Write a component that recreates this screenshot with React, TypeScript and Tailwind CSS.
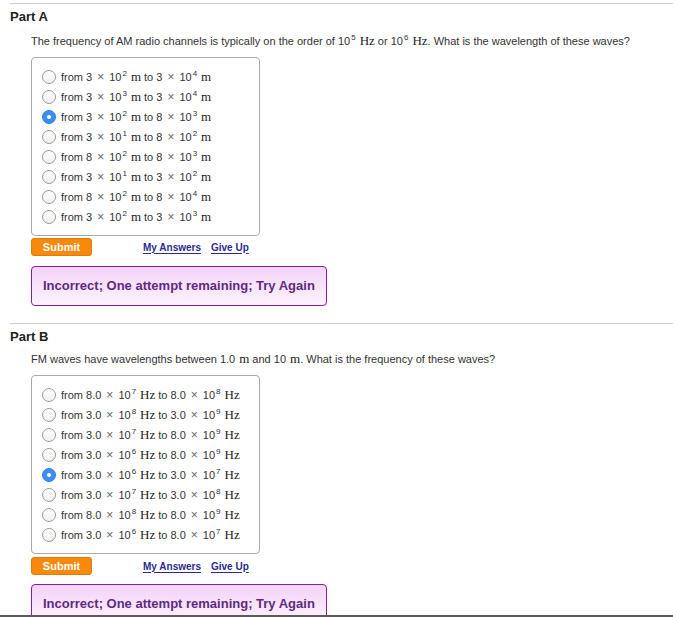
import React from 'react';

type Opt = { a: string; ea: string; b: string; eb: string; unit: string; checked?: boolean };

const Times = () => <span className="mx-[5px] text-[#666] font-['Liberation_Sans',sans-serif] text-[12px]">×</span>;

const Unit = ({ u, tight }: { u: string; tight?: boolean }) => (
    <span className={`font-['Liberation_Serif',serif] text-[13px] text-[#222] ml-[4px] ${tight ? 'mr-0' : 'mr-[3px]'}`}>{u}</span>
);

const Pow = ({ e }: { e: string }) => (
    <span>
        10<sup className="text-[8px] -top-[5px] ml-[1px]">{e}</sup>
    </span>
);

const Radio = ({ checked }: { checked?: boolean }) =>
    checked ? (
        <span className="w-[14px] h-[14px] rounded-full bg-[#3a8ef6] border border-[#2f7de0] flex items-center justify-center shrink-0">
            <span className="w-[4px] h-[4px] rounded-full bg-white" />
        </span>
    ) : (
        <span className="w-[14px] h-[14px] rounded-full bg-gradient-to-b from-white to-[#f0f0f0] border border-[#9a9a9a] shrink-0" />
    );

const OptionRow = ({ o }: { o: Opt }) => (
    <div className="h-[20px] flex items-center gap-[5px]">
        <Radio checked={o.checked} />
        <span className="text-[11px] text-[#333] whitespace-nowrap">
            from {o.a}
            <Times />
            <Pow e={o.ea} />
            <Unit u={o.unit} />
            to {o.b}
            <Times />
            <Pow e={o.eb} />
            <Unit u={o.unit} />
        </span>
    </div>
);

const Part = ({
    title,
    question,
    options,
    spacing,
}: {
    title: string;
    question: React.ReactNode;
    options: Opt[];
    spacing: { q: string; box: string; sub: string; msg: string; end: string };
}) => (
    <section className="ml-[10px] border-t border-[#cccccc]">
        <h2 className="mt-[5px] text-[13px] leading-[16px] font-bold text-[#222]">{title}</h2>
        <div className={`ml-[21px] ${spacing.q} text-[11px] leading-[16px] text-[#333]`}>{question}</div>
        <div className={`ml-[21px] ${spacing.box} w-[229px] border border-[#aaaaaa] rounded-[4px] pt-[9px] pb-[8px] pl-[10px]`}>
            {options.map((o, i) => (
                <OptionRow key={i} o={o} />
            ))}
        </div>
        <div className={`ml-[21px] ${spacing.sub} flex items-center`}>
            <button className="w-[61px] h-[18px] rounded-[3px] bg-[#f7890c] border border-[#e27b06] text-white text-[11px] font-bold leading-none">
                Submit
            </button>
            <a className="ml-[51px] text-[10px] font-bold text-[#2b2b8f] underline underline-offset-2">My Answers</a>
            <a className="ml-[10px] text-[10px] font-bold text-[#2b2b8f] underline underline-offset-2">Give Up</a>
        </div>
        <div
            className={`ml-[21px] ${spacing.msg} ${spacing.end} w-[296px] h-[40px] rounded-[4px] border border-[#8a1c9c] bg-gradient-to-b from-[#f4d2f9] to-[#fdf3fd] flex items-center pl-[11px] text-[13px] font-bold text-[#5d2b80]`}
        >
            Incorrect; One attempt remaining; Try Again
        </div>
    </section>
);

const partA: Opt[] = [
    { a: '3', ea: '2', b: '3', eb: '4', unit: 'm' },
    { a: '3', ea: '3', b: '3', eb: '4', unit: 'm' },
    { a: '3', ea: '2', b: '8', eb: '3', unit: 'm', checked: true },
    { a: '3', ea: '1', b: '8', eb: '2', unit: 'm' },
    { a: '8', ea: '2', b: '8', eb: '3', unit: 'm' },
    { a: '3', ea: '1', b: '3', eb: '2', unit: 'm' },
    { a: '8', ea: '2', b: '8', eb: '4', unit: 'm' },
    { a: '3', ea: '2', b: '3', eb: '3', unit: 'm' },
];

const partB: Opt[] = [
    { a: '8.0', ea: '7', b: '8.0', eb: '8', unit: 'Hz' },
    { a: '3.0', ea: '8', b: '3.0', eb: '9', unit: 'Hz' },
    { a: '3.0', ea: '7', b: '8.0', eb: '9', unit: 'Hz' },
    { a: '3.0', ea: '6', b: '8.0', eb: '9', unit: 'Hz' },
    { a: '3.0', ea: '6', b: '3.0', eb: '7', unit: 'Hz', checked: true },
    { a: '3.0', ea: '7', b: '3.0', eb: '8', unit: 'Hz' },
    { a: '8.0', ea: '8', b: '8.0', eb: '9', unit: 'Hz' },
    { a: '3.0', ea: '6', b: '8.0', eb: '7', unit: 'Hz' },
];

export default function App() {
    return (
        <div className="w-[673px] h-[617px] overflow-hidden bg-white font-['Liberation_Sans',Arial,sans-serif] relative">
            <div className="pt-[3px]">
                <Part
                    title="Part A"
                    question={
                        <>
                            The frequency of AM radio channels is typically on the order of <Pow e="5" />
                            <Unit u="Hz" />
                            or <Pow e="6" />
                            <Unit u="Hz" tight />. What is the wavelength of these waves?
                        </>
                    }
                    options={partA}
                    spacing={{ q: 'mt-[8px]', box: 'mt-[8px]', sub: 'mt-[2px]', msg: 'mt-[10px]', end: 'mb-[17px]' }}
                />
                <Part
                    title="Part B"
                    question={
                        <>
                            FM waves have wavelengths between 1.0
                            <Unit u="m" />
                            and 10
                            <Unit u="m" tight />. What is the frequency of these waves?
                        </>
                    }
                    options={partB}
                    spacing={{ q: 'mt-[6px]', box: 'mt-[8px]', sub: 'mt-[3px]', msg: 'mt-[9px]', end: 'mb-[0px]' }}
                />
            </div>
            <div className="absolute left-0 right-0 bottom-0 h-[2px] bg-[#5a5a5a]" />
        </div>
    );
}
